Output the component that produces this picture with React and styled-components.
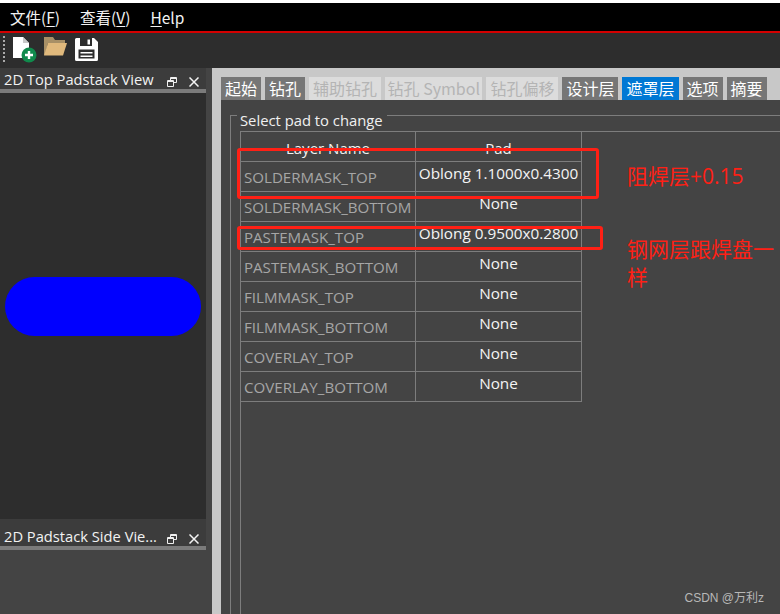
import React from 'react';
import styled, { createGlobalStyle } from 'styled-components';

const Global = createGlobalStyle`
  html, body { margin: 0; padding: 0; background: #444; overflow: hidden; }
  * { box-sizing: border-box; }
`;

const Page = styled.div`
  position: relative;
  width: 780px;
  height: 614px;
  padding-top: 3px;
  background: #fff;
  display: flex;
  flex-direction: column;
  overflow: hidden;
  font-family: "Open Sans", "Noto Sans CJK SC", sans-serif;
  color: #f2f2f2;
`;

const MenuBar = styled.div`
  height: 28px;
  background: #000;
  display: flex;
  align-items: center;
  padding-left: 10px;
  gap: 20px;
  font-size: 15.5px;
  flex: none;
`;
const MenuItem = styled.span`
  font-family: "Noto Sans CJK SC", sans-serif;
  u { text-underline-offset: 2px; }
`;
const RedLine = styled.div`
  height: 2px;
  background: #d40000;
  flex: none;
`;
const ToolBar = styled.div`
  height: 35px;
  background: #2d2d2d;
  display: flex;
  align-items: flex-start;
  padding: 4px 0 0 3px;
  gap: 6px;
  flex: none;
`;
const Grip = styled.div`
  width: 2px;
  height: 26px;
  margin: -1px 1px 0 0;
  background: repeating-linear-gradient(to bottom, #aaa 0 2px, transparent 2px 4px);
`;

const Main = styled.div`
  flex: 1;
  display: flex;
  background: #444;
  min-height: 0;
`;
const Docks = styled.div`
  width: 206px;
  margin-right: 6px;
  display: flex;
  flex-direction: column;
  flex: none;
`;
const DockTitle = styled.div`
  height: ${p => p.$h}px;
  background: #3c3c3c;
  display: flex;
  align-items: center;
  justify-content: space-between;
  padding: ${p => p.$top}px 7px 0 4px;
  font-size: 14.7px;
  line-height: 20px;
  white-space: nowrap;
  flex: none;
`;
const DockRule = styled.div`
  height: 4px;
  background: #7b7b7b;
  flex: none;
`;
const DockButtons = styled.div`
  display: flex;
  align-items: center;
  gap: 12px;
  margin-top: 5px;
`;
const TopView = styled.div`
  height: 426px;
  background: #2d2d2d;
  display: flex;
  align-items: center;
  justify-content: center;
  padding-top: 1px;
  flex: none;
`;
const Pad = styled.div`
  width: 196px;
  height: 59px;
  background: #0000ff;
  border-radius: 30px;
`;

const Right = styled.div`
  flex: 1;
  background: #c8c8c8;
  padding: 9px 0 0 9px;
  display: flex;
  flex-direction: column;
  min-width: 0;
`;
const TabRow = styled.div`
  height: 23px;
  display: flex;
  gap: 4px;
  flex: none;
`;
const Tab = styled.div`
  height: 23px;
  padding: 0 ${p => p.$pad || 4}px;
  background: ${p => (p.$active ? '#0078d4' : p.$disabled ? '#dcdcdc' : '#767676')};
  color: ${p => (p.$disabled ? '#b4b4b4' : '#fff')};
  font-size: 16px;
  line-height: 23px;
  font-family: "Noto Sans CJK SC", "Open Sans", sans-serif;
  white-space: nowrap;
`;
const TabBody = styled.div`
  flex: 1;
  background: #444;
  padding: 15px 0 0 9px;
  min-height: 0;
`;
const Group = styled.div`
  position: relative;
  height: 100%;
  border-left: 1px solid #7d7d7d;
  border-top: 1px solid #7d7d7d;
  padding: 15px 0 0 9px;
`;
const GroupLabel = styled.span`
  position: absolute;
  top: -5px;
  left: 6px;
  padding: 0 4px 0 3px;
  background: #444;
  font-size: 14.8px;
  line-height: 18px;
  color: #f0f0f0;
`;
const Frame = styled.div`
  height: 100%;
  border-left: 1px solid #7d7d7d;
  border-top: 1px solid #7d7d7d;
`;
const Grid = styled.div`
  display: grid;
  grid-template-columns: 175px 166px;
  grid-auto-rows: 30px;
  width: 341px;
`;
const Cell = styled.div`
  border-right: 1px solid #7d7d7d;
  border-bottom: 1px solid #7d7d7d;
  white-space: nowrap;
  overflow: hidden;
`;
const HeadCell = styled(Cell)`
  text-align: center;
  font-size: 15px;
  line-height: 33px;
  color: #f2f2f2;
`;
const NameCell = styled(Cell)`
  padding-left: 3px;
  font-size: 15.1px;
  line-height: 31px;
  color: #a6a6a6;
`;
const PadCell = styled(Cell)`
  text-align: center;
  font-size: 15.3px;
  line-height: 23px;
  color: #f4f4f4;
`;

const Mark = styled.div`
  position: absolute;
  left: ${p => p.$x}px;
  top: ${p => p.$y}px;
  width: ${p => p.$w}px;
  height: ${p => p.$h}px;
  border: 3px solid #ff2015;
  border-radius: 3px;
`;
const Note = styled.div`
  position: absolute;
  left: ${p => p.$x}px;
  top: ${p => p.$y}px;
  width: ${p => p.$w}px;
  color: #ff2015;
  font-size: 21px;
  line-height: 28px;
  font-family: "Open Sans", "Noto Sans CJK SC", sans-serif;
`;
const Watermark = styled.div`
  position: absolute;
  right: 16px;
  bottom: 8px;
  font-size: 12px;
  line-height: 16px;
  color: #b8b8b8;
  font-family: "Liberation Sans", "Noto Sans CJK SC", sans-serif;
`;

const NewIcon = () => (
  <svg width="25" height="27" viewBox="0 2 25 27">
    <path d="M1 2h10l6 6v15H1z" fill="#fff" />
    <path d="M11 2v6h6z" fill="#c9c9c9" />
    <circle cx="17" cy="20" r="7.5" fill="#108a4c" />
    <path d="M17 16v8M13 20h8" stroke="#fff" strokeWidth="2.4" />
  </svg>
);
const FolderIcon = () => (
  <svg width="25" height="21" viewBox="0 1 25 21">
    <path d="M1 1h9l2 3h10v3H5L2 19H1z" fill="#a89066" />
    <path d="M5 7h19l-4 12.500H1z" fill="#e0b97c" />
  </svg>
);
const SaveIcon = () => (
  <svg width="25" height="25" viewBox="0 0 25 25">
    <path d="M1 2.500a1.500 1.500 0 0 1 1.500-1.500H20l4 4v17.500a1.500 1.500 0 0 1-1.500 1.500h-20A1.500 1.500 0 0 1 1 22.500z" fill="#fff" />
    <path d="M6 1h12v8H6z" fill="#2d2d2d" />
    <path d="M13.500 2.500h2.500v5h-2.500z" fill="#fff" />
    <path d="M4.500 12.500h16v9h-16z" fill="#2d2d2d" />
    <path d="M6.500 15h12v1.500h-12zM6.500 18.500h12V20h-12z" fill="#fff" />
  </svg>
);
const FloatIcon = () => (
  <svg width="10" height="10" viewBox="0 0 10 10" fill="none" stroke="#f0f0f0" strokeWidth="1">
    <path d="M3.500 3V.5h6v5H7" />
    <path d="M.5 3.500h6v6h-6z" />
    <path d="M3.500 1.500h6M.5 4.500h6" />
  </svg>
);
const CloseIcon = () => (
  <svg width="10" height="10" viewBox="0 0 10 10" fill="none" stroke="#f4f4f4" strokeWidth="1.500">
    <path d="M.5.500l9 9M9.500.500l-9 9" />
  </svg>
);

const rows = [
  ['SOLDERMASK_TOP', 'Oblong 1.1000x0.4300'],
  ['SOLDERMASK_BOTTOM', 'None'],
  ['PASTEMASK_TOP', 'Oblong 0.9500x0.2800'],
  ['PASTEMASK_BOTTOM', 'None'],
  ['FILMMASK_TOP', 'None'],
  ['FILMMASK_BOTTOM', 'None'],
  ['COVERLAY_TOP', 'None'],
  ['COVERLAY_BOTTOM', 'None'],
];

const tabs = [
  { label: '起始' },
  { label: '钻孔' },
  { label: '辅助钻孔', disabled: true },
  { label: '钻孔 Symbol', disabled: true, pad: 2.5 },
  { label: '钻孔偏移', disabled: true },
  { label: '设计层' },
  { label: '遮罩层', active: true },
  { label: '选项' },
  { label: '摘要' },
];

export default function App() {
  return (
    <Page>
      <Global />
      <MenuBar>
        <MenuItem>文件(<u>F</u>)</MenuItem>
        <MenuItem>查看(<u>V</u>)</MenuItem>
        <MenuItem><u>H</u>elp</MenuItem>
      </MenuBar>
      <RedLine />
      <ToolBar>
        <Grip />
        <NewIcon />
        <FolderIcon />
        <SaveIcon />
      </ToolBar>
      <Main>
        <Docks>
          <DockTitle $h={21} $top={1}>
            2D Top Padstack View
            <DockButtons><FloatIcon /><CloseIcon /></DockButtons>
          </DockTitle>
          <DockRule />
          <TopView><Pad /></TopView>
          <DockTitle $h={27} $top={7}>
            2D Padstack Side Vie...
            <DockButtons><FloatIcon /><CloseIcon /></DockButtons>
          </DockTitle>
          <DockRule />
        </Docks>
        <Right>
          <TabRow>
            {tabs.map(t => (
              <Tab key={t.label} $active={t.active} $disabled={t.disabled} $pad={t.pad}>{t.label}</Tab>
            ))}
          </TabRow>
          <TabBody>
            <Group>
              <GroupLabel>Select pad to change</GroupLabel>
              <Frame>
                <Grid>
                  <HeadCell>Layer Name</HeadCell>
                  <HeadCell>Pad</HeadCell>
                  {rows.map(([name, pad]) => (
                    <React.Fragment key={name}>
                      <NameCell>{name}</NameCell>
                      <PadCell>{pad}</PadCell>
                    </React.Fragment>
                  ))}
                </Grid>
              </Frame>
            </Group>
          </TabBody>
        </Right>
      </Main>
      <Mark $x={237} $y={148} $w={362} $h={51} />
      <Mark $x={237} $y={226} $w={366} $h={24} />
      <Note $x={627} $y={162} $w={150}>阻焊层+0.15</Note>
      <Note $x={627} $y={235} $w={150}>钢网层跟焊盘一样</Note>
      <Watermark>CSDN @万利z</Watermark>
    </Page>
  );
}
